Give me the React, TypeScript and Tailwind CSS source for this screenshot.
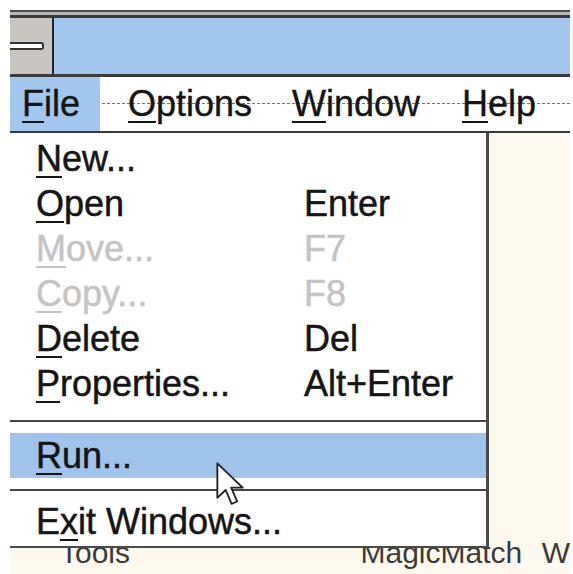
import React from "react";

const font = { fontFamily: '"Liberation Sans", Arial, sans-serif' };

function U({ children }: { children: React.ReactNode }) {
  return (
    <span className="underline decoration-[2px] underline-offset-[5px]">{children}</span>
  );
}

type Item = { pre?: string; u: string; post: string; key?: string; disabled?: boolean };

const items: Item[] = [
  { u: "N", post: "ew..." },
  { u: "O", post: "pen", key: "Enter" },
  { u: "M", post: "ove...", key: "F7", disabled: true },
  { u: "C", post: "opy...", key: "F8", disabled: true },
  { u: "D", post: "elete", key: "Del" },
  { u: "P", post: "roperties...", key: "Alt+Enter" },
];

function Row({ it, highlight }: { it: Item; highlight?: boolean }) {
  return (
    <div
      className={
        "flex h-[45px] items-center pl-[26px] text-[36px] leading-[45px] " +
        (it.disabled ? "text-[#c4c4c4] " : "text-[#151515] ") +
        (highlight ? "bg-[#9fc3eb]" : "")
      }
    >
      <span className="w-[268px] whitespace-nowrap [-webkit-text-stroke:0.5px]">
        {it.pre}
        <U>{it.u}</U>
        {it.post}
      </span>
      {it.key && <span className="whitespace-nowrap [-webkit-text-stroke:0.5px]">{it.key}</span>}
    </div>
  );
}

export default function App() {
  return (
    <div className="relative h-[574px] w-[573px] overflow-hidden bg-white" style={font}>
      <div className="flex h-full flex-col pl-[10px] pr-[3px] pt-[10px]">
        {/* top frame lines */}
        <div className="h-[2px] bg-[#4a4a4a]" />
        <div className="h-[3px] bg-[#b8b8b8]" />
        <div className="h-[3px] bg-[#3a3a3a]" />
        {/* title bar */}
        <div className="flex h-[56px]">
          <div className="flex w-[42px] items-center bg-[#c9c5c1]">
            <div className="h-[8px] w-[34px] rounded-r-[3px] border-2 border-l-0 border-[#333] bg-white" />
          </div>
          <div className="w-[2px] bg-[#222]" />
          <div className="flex-1 bg-[#a3c6ee]" />
        </div>
        <div className="h-[3px] bg-[#3a3a3a]" />
        {/* menu bar */}
        <div className="relative flex h-[54px] items-center bg-white text-[36px] leading-[54px] text-[#151515]">
          <div className="absolute left-[62px] right-0 top-[26px] border-t border-dashed border-[#8a6a6a]" />
          <div className="relative h-full w-[90px] bg-[#a3c6ee] pl-[12px] [-webkit-text-stroke:0.4px]">
            <U>F</U>ile
          </div>
          <div className="relative ml-[28px] w-[164px] [-webkit-text-stroke:0.4px]">
            <U>O</U>ptions
          </div>
          <div className="relative w-[170px] [-webkit-text-stroke:0.4px]">
            <U>W</U>indow
          </div>
          <div className="relative [-webkit-text-stroke:0.4px]">
            <U>H</U>elp
          </div>
        </div>
        <div className="h-[2px] bg-[#3a3a3a]" />
        {/* program manager client area */}
        <div className="flex flex-1 flex-col justify-end bg-[#fdf9ee]">
          <div className="flex h-[36px] items-start text-[30px] leading-[30px] text-[#3a3a3a]">
            <span className="ml-[50px] w-[315px]">Tools</span>
            <span className="w-[190px]">MagicMatch</span>
            <span>W</span>
          </div>
        </div>
      </div>

      {/* File dropdown menu */}
      <div className="absolute left-[10px] top-[133px] w-[479px] border-b-[2px] border-r-[3px] border-[#4a4a4a] bg-white">
        <div className="pt-[3px]">
          {items.map((it) => (
            <Row key={it.u} it={it} />
          ))}
        </div>
        <div className="mt-[14px] h-[2px] bg-[#444]" />
        <div className="mt-[11px]">
          <Row it={{ u: "R", post: "un..." }} highlight />
        </div>
        <div className="mt-[11px] h-[2px] bg-[#444]" />
        <div className="flex h-[55px] items-center pl-[26px] pt-[6px] text-[36px] text-[#151515]">
          <span className="whitespace-nowrap [-webkit-text-stroke:0.5px]">
            E<U>x</U>it Windows...
          </span>
        </div>
      </div>

      {/* mouse cursor */}
      <svg
        className="absolute left-[215px] top-[461px]"
        width="30"
        height="46"
        viewBox="0 0 13 20"
      >
        <path
          d="M1 1 L1 16 L4.6 12.6 L7.2 18.6 L9.6 17.6 L7 11.6 L12 11.6 Z"
          fill="white"
          stroke="#222"
          strokeWidth="0.8"
          strokeLinejoin="round"
        />
      </svg>
    </div>
  );
}
